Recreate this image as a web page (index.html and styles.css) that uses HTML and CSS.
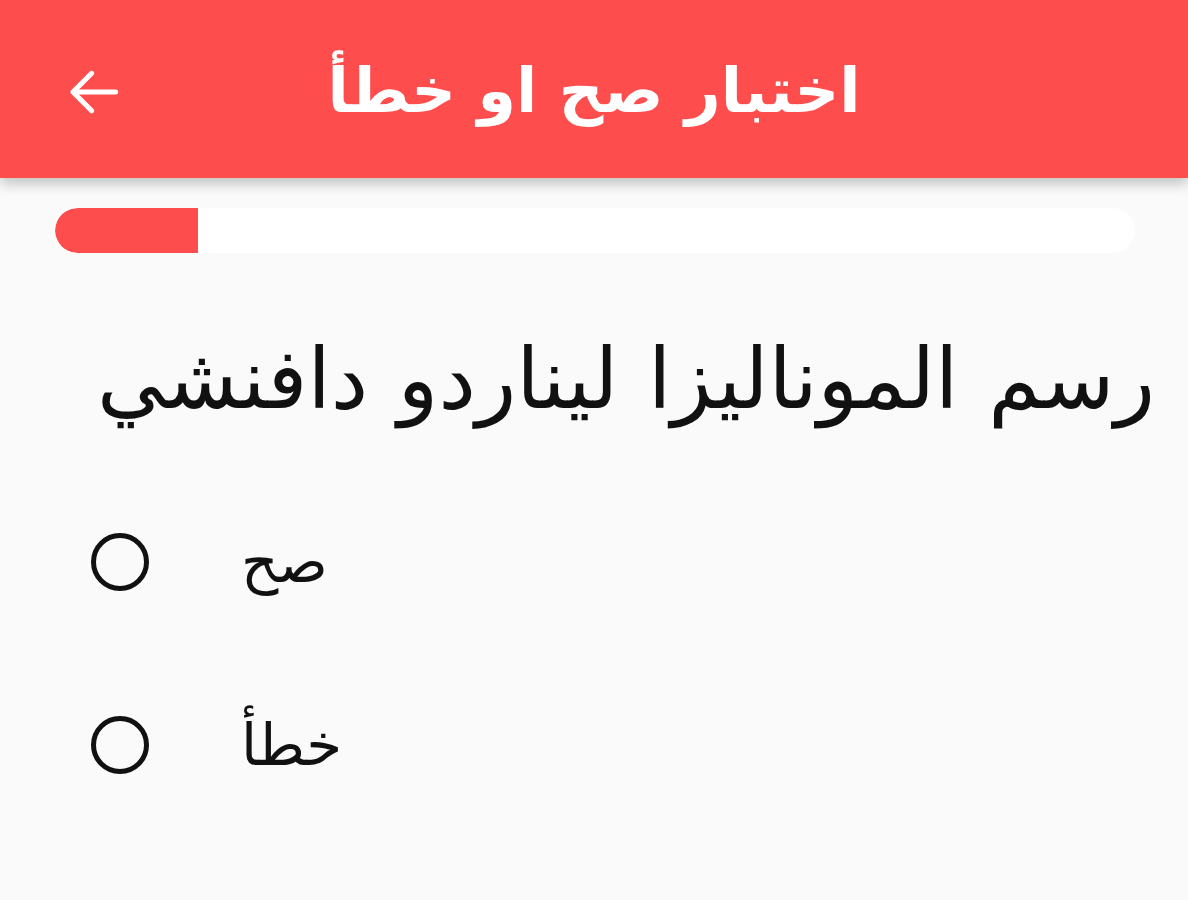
FILE: index.html
```html
<!DOCTYPE html>
<html lang="ar">
<head>
<meta charset="utf-8">
<link rel="stylesheet" href="styles.css">
</head>
<body>
<header class="appbar">
  <button class="back" aria-label="back">
    <svg viewBox="0 0 24 24" width="64" height="64"><path d="M20.5 12H4.5M11.5 5l-7 7 7 7" fill="none" stroke="#fff" stroke-width="1.9" stroke-linecap="round" stroke-linejoin="round"/></svg>
  </button>
  <h1 class="title" dir="rtl">اختبار صح او خطأ</h1>
</header>
<main class="content">
  <div class="progress"><div class="progress-fill" style="width:13.2%"></div></div>
  <p class="question" dir="rtl">رسم الموناليزا ليناردو دافنشي</p>
  <ul class="options">
    <li class="option"><span class="radio"></span><span class="label" dir="rtl">صح</span></li>
    <li class="option"><span class="radio"></span><span class="label" dir="rtl">خطأ</span></li>
  </ul>
</main>
</body>
</html>
```
FILE: styles.css
```css
* { box-sizing: border-box; }
html, body { margin: 0; padding: 0; }
body {
  width: 1188px;
  height: 900px;
  background: #fafafa;
  font-family: "DejaVu Sans", sans-serif;
  overflow: hidden;
}
.appbar {
  height: 178px;
  background: #fe4d4d;
  display: flex;
  align-items: center;
  justify-content: center;
  position: relative;
  box-shadow: 0 6px 12px rgba(0,0,0,0.22);
}
.back {
  position: absolute;
  left: 61px;
  top: 60px;
  background: none;
  border: 0;
  padding: 0;
  width: 64px;
  height: 64px;
  display: flex;
}
.title {
  margin: 0;
  color: #fff;
  font-size: 62px;
  font-weight: bold;
  line-height: 1;
  padding-top: 4px;
}
.content {
  padding: 30px 53px 0 55px;
}
.progress {
  height: 45px;
  background: #fff;
  border-radius: 23px;
  overflow: hidden;
}
.progress-fill {
  height: 100%;
  background: #fe4d4d;
  border-radius: 23px 0 0 23px;
}
.question {
  margin: 76px -20px 0 30px;
  font-size: 84px;
  word-spacing: 3px;
  line-height: 1.2;
  color: #111;
  text-align: right;
  white-space: nowrap;
}
.options {
  list-style: none;
  margin: 103px 0 0 0;
  padding: 0 0 0 36px;
  display: flex;
  flex-direction: column;
  gap: 125px;
}
.option {
  display: flex;
  align-items: center;
  height: 58px;
}
.radio {
  width: 58px;
  height: 58px;
  border: 5px solid #111;
  border-radius: 50%;
  flex: none;
}
.label {
  margin-left: 92px;
  font-size: 58px;
  color: #111;
}
```
